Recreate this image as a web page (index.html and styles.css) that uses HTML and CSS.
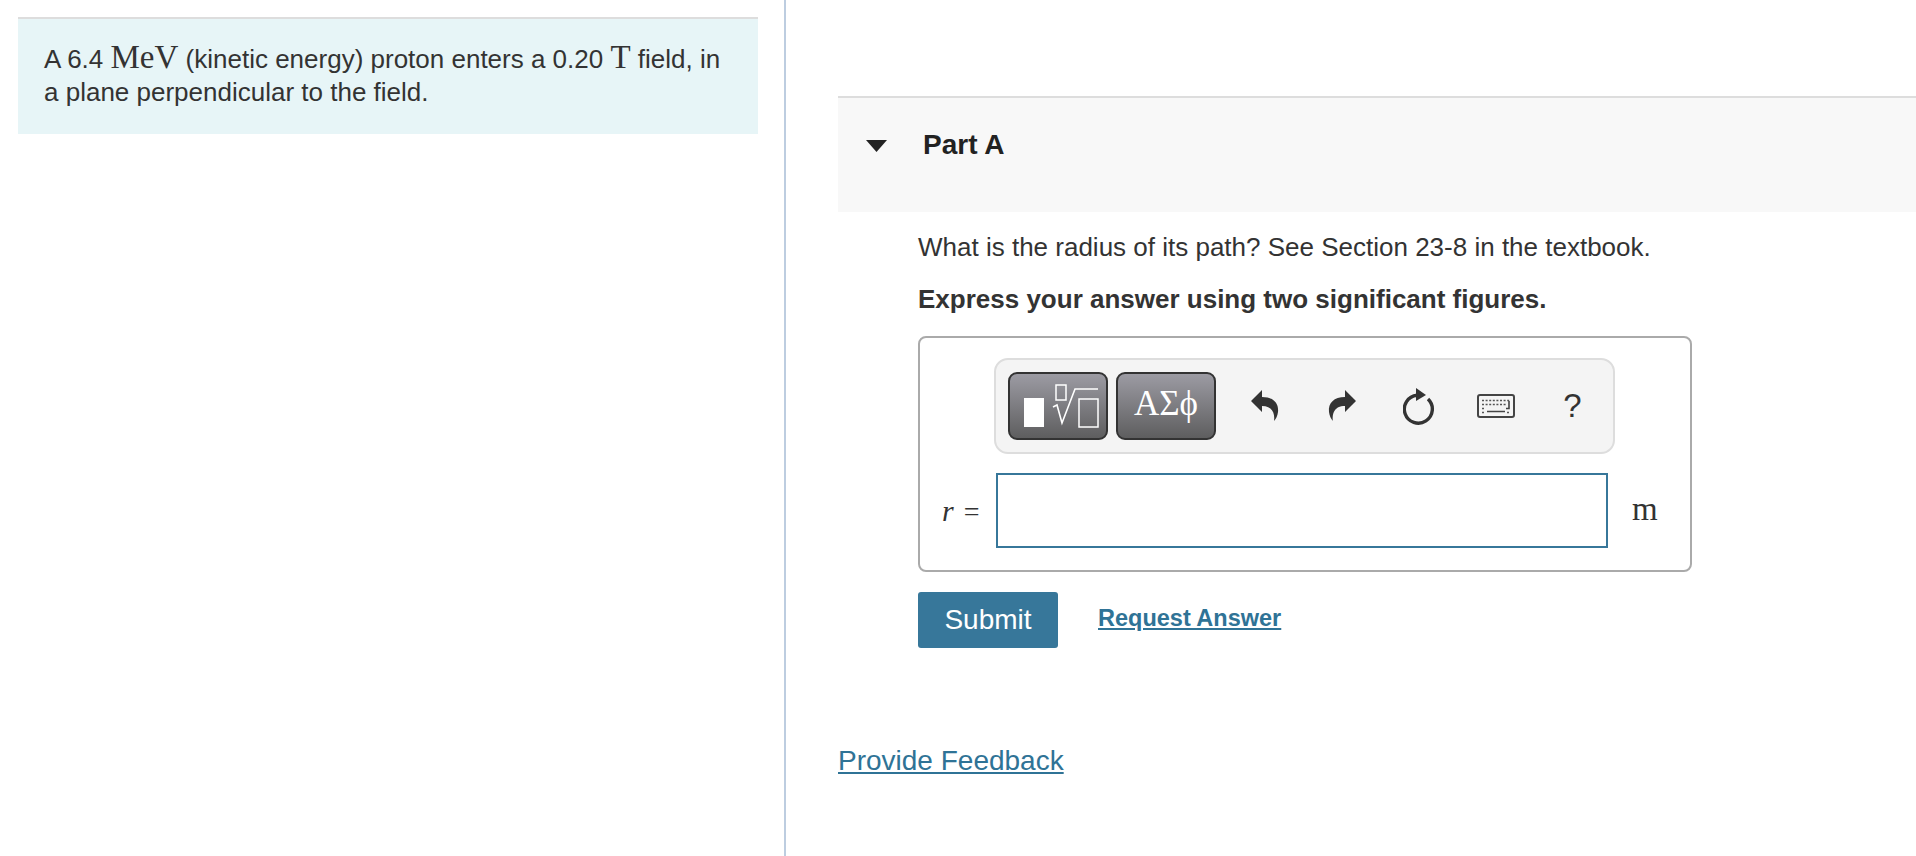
FILE: index.html
```html
<!DOCTYPE html>
<html lang="en">
<head>
    <meta charset="UTF-8">
    <title>Part A</title>
    <link rel="stylesheet" href="styles.css">
</head>
<body>
    <div class="left-col">
        <div class="intro">
            A 6.4 <span class="math">MeV</span> (kinetic energy) proton enters a 0.20 <span class="math">T</span> field, in a plane perpendicular to the field.
        </div>
    </div>
    <div class="right-col">
        <div class="part-header">
            <svg class="caret" width="21" height="12" viewBox="0 0 21 12"><path d="M0 0H21L10.5 12Z"/></svg>
            <h2>Part A</h2>
        </div>
        <div class="part-body">
            <p class="question">What is the radius of its path? See Section 23-8 in the textbook.</p>
            <p class="instruction">Express your answer using two significant figures.</p>

            <div class="answer-box">
                <div class="toolbar">
                    <div class="tool-btn tool-btn-math">
                        <svg width="96" height="64" viewBox="0 0 96 64">
                            <rect x="14" y="24" width="20" height="29" fill="#fff"/>
                            <rect x="46" y="11" width="10" height="15" fill="none" stroke="#fff" stroke-width="1.5"/>
                            <rect x="69" y="25" width="19" height="28" fill="none" stroke="#fff" stroke-width="1.5"/>
                            <path d="M43 33L47 31L52 49L65 15H88" fill="none" stroke="#fff" stroke-width="1.6"/>
                        </svg>
                    </div>
                    <div class="tool-btn tool-btn-greek">ΑΣϕ</div>
                    <div class="tool-icons">
                        <div class="tool">
                            <svg width="28" height="32" viewBox="0 0 28 32"><path class="solid" d="M0 11L11 0V7C22 7 28 13 27 22C26.5 26 25 29 23 31C24 24 22 16 11 16V22Z"/></svg>
                        </div>
                        <div class="tool">
                            <svg class="flip" width="28" height="32" viewBox="0 0 28 32"><path class="solid" d="M0 11L11 0V7C22 7 28 13 27 22C26.5 26 25 29 23 31C24 24 22 16 11 16V22Z"/></svg>
                        </div>
                        <div class="tool">
                            <svg width="32" height="37" viewBox="0 0 32 37">
                                <path d="M25 11A14 14 0 1 1 14 7.2" fill="none" stroke="#333" stroke-width="3.4"/>
                                <path class="solid" d="M13 0L23 7L13 13Z"/>
                            </svg>
                        </div>
                        <div class="tool">
                            <svg width="38" height="24" viewBox="0 0 38 24">
                                <rect x="1" y="1" width="36" height="22" rx="2" fill="none" stroke="#444" stroke-width="2"/>
                                <path d="M5 6.5H33M5 10.5H29M5 14.5H8M5 18.5H8M30 18.5H33" fill="none" stroke="#555" stroke-width="1.6" stroke-dasharray="2 1.6"/>
                                <path d="M10 17.5H28M32 7V14.5H29" fill="none" stroke="#444" stroke-width="1.6"/>
                            </svg>
                        </div>
                        <div class="tool tool-help">?</div>
                    </div>
                </div>
                <div class="answer-row">
                    <label class="var-label"><i>r</i> =</label>
                    <input class="answer-input" type="text">
                    <span class="unit">m</span>
                </div>
            </div>

            <div class="actions">
                <button class="submit-btn">Submit</button>
                <a class="request-link" href="javascript:;">Request Answer</a>
            </div>
        </div>
        <a class="feedback-link" href="javascript:;">Provide Feedback</a>
    </div>
</body>
</html>
```

FILE: styles.css
```css
* {
    box-sizing: border-box;
}

html,
body {
    height: 100%;
}

body {
    margin: 0;
    display: flex;
    overflow: hidden;
    background: #fff;
    color: #333;
    font-family: "Liberation Sans", Arial, sans-serif;
    font-size: 26px;
}

.left-col {
    width: 786px;
    height: 100%;
    padding: 17px 26px 0 18px;
    border-right: 2px solid #bdcde0;
}

.intro {
    height: 117px;
    padding: 23px 26px 0;
    border-top: 2px solid #ddd;
    background: #e7f5f7;
    line-height: 33px;
}

.math {
    font-family: "Liberation Serif", serif;
    font-size: 33px;
    line-height: 30px;
}

.right-col {
    flex: 1;
    padding: 96px 0 0 52px;
}

.part-header {
    display: flex;
    height: 116px;
    padding: 41px 0 0 28px;
    border-top: 2px solid #ddd;
    background: #f8f8f8;
}

.caret {
    margin-top: 1px;
    fill: #222;
}

.part-header h2 {
    margin: -14px 0 0 36px;
    font-size: 28px;
    line-height: 40px;
    color: #222;
}

.part-body {
    padding: 0 224px 0 80px;
}

.question {
    margin: 19px 0 0;
    line-height: 33px;
}

.instruction {
    margin: 19px 0 0;
    line-height: 33px;
    font-weight: bold;
}

.answer-box {
    margin-top: 20px;
    height: 236px;
    padding-top: 20px;
    border: 2px solid #aaa;
    border-radius: 8px;
}

.toolbar {
    display: flex;
    width: 621px;
    height: 96px;
    margin-left: 74px;
    padding: 12px 0 0 12px;
    border: 2px solid #ddd;
    border-radius: 14px;
    background: #f4f4f4;
}

.tool-btn {
    height: 68px;
    border: 2px solid #333;
    border-radius: 9px;
    background: linear-gradient(#9c9ba3, #5e5e5f);
    color: #fff;
}

.tool-btn-math {
    width: 100px;
}

.tool-btn-greek {
    width: 100px;
    margin-left: 8px;
    font-family: "Liberation Serif", serif;
    font-size: 35px;
    line-height: 60px;
    text-align: center;
}

.tool-icons {
    display: flex;
    margin-left: 10px;
}

.tool {
    display: flex;
    align-items: center;
    justify-content: center;
    width: 77px;
    height: 68px;
}

.tool-help {
    font-size: 33px;
}

.solid {
    fill: #333;
}

.flip {
    transform: scaleX(-1);
}

.answer-row {
    display: flex;
    align-items: center;
    margin-top: 19px;
    height: 75px;
}

.var-label {
    width: 76px;
    padding-left: 22px;
    font-family: "Liberation Serif", serif;
    font-size: 28px;
    white-space: nowrap;
}

.var-label i {
    margin-right: 3px;
    font-size: 30px;
}

.answer-input {
    width: 612px;
    height: 75px;
    border: 2px solid #37779a;
    border-radius: 0;
    outline: none;
}

.unit {
    margin: -3px 0 0 24px;
    font-family: "Liberation Serif", serif;
    font-size: 33px;
}

.actions {
    display: flex;
    align-items: flex-start;
    margin-top: 20px;
}

.submit-btn {
    width: 140px;
    height: 56px;
    border: none;
    border-radius: 3px;
    background: #37779a;
    color: #fff;
    font-family: "Liberation Sans", Arial, sans-serif;
    font-size: 28px;
}

.request-link {
    margin: 10px 0 0 40px;
    color: #2f7396;
    font-size: 23.5px;
    font-weight: bold;
    line-height: 33px;
}

.feedback-link {
    display: inline-block;
    margin-top: 96px;
    color: #2f7396;
    font-size: 28px;
    line-height: 33px;
}
```
